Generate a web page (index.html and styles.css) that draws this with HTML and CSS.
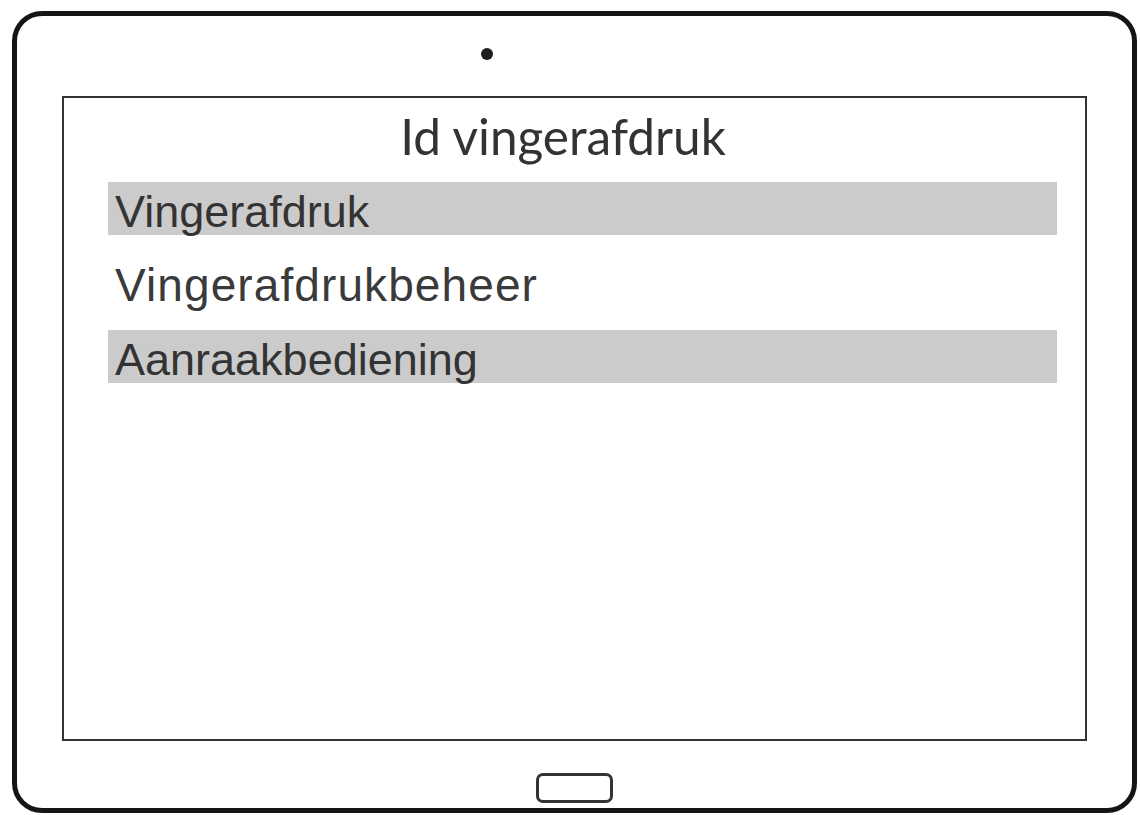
FILE: index.html
```html
<!DOCTYPE html>
<html lang="nl">
<head>
<meta charset="utf-8">
<title>Id vingerafdruk</title>
<link rel="stylesheet" href="styles.css">
</head>
<body>
<div class="tablet">
  <div class="camera"></div>
  <div class="screen">
    <div class="title">Id vingerafdruk</div>
    <ul class="menu">
      <li class="item shaded">Vingerafdruk</li>
      <li class="item wide">Vingerafdrukbeheer</li>
      <li class="item shaded">Aanraakbediening</li>
    </ul>
  </div>
  <div class="home"></div>
</div>
</body>
</html>
```

FILE: styles.css
```css
html, body {
  margin: 0;
  padding: 0;
  background: #ffffff;
}
body {
  width: 1140px;
  height: 815px;
  overflow: hidden;
}
.tablet {
  box-sizing: border-box;
  width: 1125px;
  height: 802px;
  margin: 11px 0 0 12px;
  border: 5px solid #151515;
  border-radius: 30px;
  padding: 0 45px;
  display: flex;
  flex-direction: column;
}
.camera {
  width: 12px;
  height: 12px;
  border-radius: 50%;
  background: #1e1e1e;
  margin: 32px 0 0 419px;
  flex: none;
}
.screen {
  box-sizing: border-box;
  height: 645px;
  margin-top: 36px;
  border: 2px solid #333;
  padding: 0 28px 0 44px;
  flex: none;
}
.title {
  font-family: Lato, "Open Sans", sans-serif;
  font-size: 49.5px;
  color: #333;
  text-align: center;
  line-height: 50px;
  height: 50px;
  margin: 13px 0 21px 0;
  padding-right: 39px;
}
.menu {
  list-style: none;
  margin: 0;
  padding: 0;
  display: flex;
  flex-direction: column;
  gap: 21px;
}
.item {
  box-sizing: border-box;
  height: 53px;
  padding: 6px 0 0 7px;
  line-height: 47px;
  font-family: "Liberation Sans", Arial, sans-serif;
  font-size: 45px;
  color: #333;
}
.wide {
  font-size: 46px;
  letter-spacing: 1.1px;
  color: #3a3a3a;
}
.shaded {
  background: #cbcbcb;
}
.home {
  box-sizing: border-box;
  width: 77px;
  height: 30px;
  border: 3px solid #333;
  border-radius: 7px;
  margin-top: 32px;
  align-self: center;
  flex: none;
}
```
